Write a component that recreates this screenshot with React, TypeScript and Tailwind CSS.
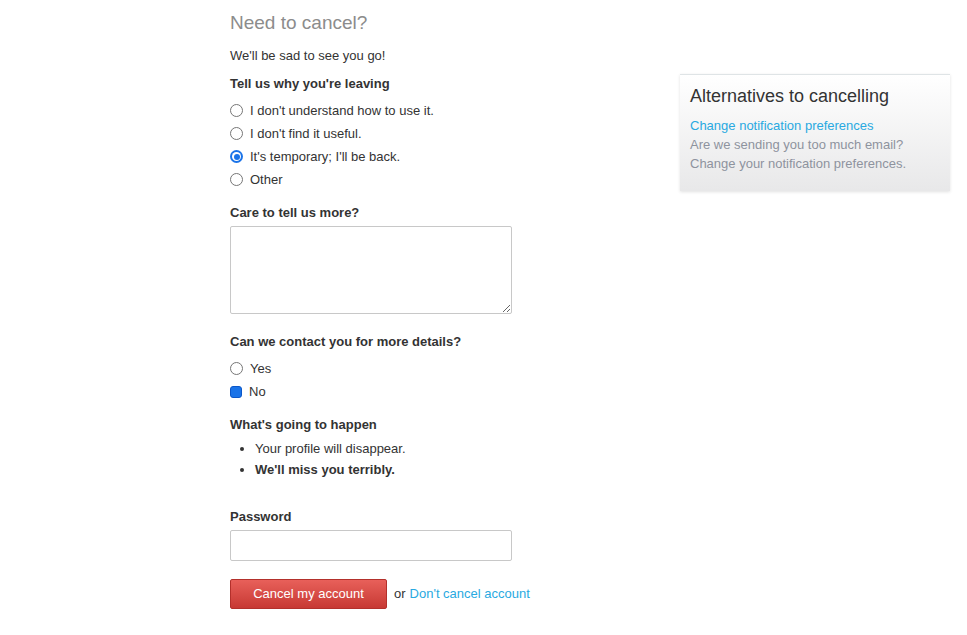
import React from "react";

const reasons = [
  "I don't understand how to use it.",
  "I don't find it useful.",
  "It's temporary; I'll be back.",
  "Other",
];

function Radio({ checked = false }: { checked?: boolean }) {
  if (checked) {
    return (
      <span className="flex h-[13px] w-[13px] shrink-0 items-center justify-center rounded-full bg-[#1a73e8]">
        <span className="flex h-[9px] w-[9px] items-center justify-center rounded-full bg-white">
          <span className="h-[6px] w-[6px] rounded-full bg-[#1a73e8]" />
        </span>
      </span>
    );
  }
  return <span className="h-[13px] w-[13px] shrink-0 rounded-full border border-[#767676] bg-white" />;
}

function Option({ label, checked, square }: { label: string; checked?: boolean; square?: boolean }) {
  return (
    <label className="flex h-[23px] items-center gap-[7px]">
      {square ? (
        <span className="h-[12px] w-[12px] shrink-0 rounded-[3px] border border-[#0b57c9] bg-[#1a73e8]" />
      ) : (
        <Radio checked={checked} />
      )}
      <span>{label}</span>
    </label>
  );
}

export default function App() {
  return (
    <div
      className="flex min-h-[635px] bg-white pl-[230px] text-[13px] leading-[18px] text-[#333]"
      style={{ fontFamily: '"Liberation Sans", Arial, sans-serif' }}
    >
      <form className="w-[450px]">
        <h1 className="mt-[11px] text-[19px] font-light leading-[24px] text-[#8c8c8c]">Need to cancel?</h1>
        <p className="mt-[12px]">We'll be sad to see you go!</p>

        <div className="mt-[10px] font-bold">Tell us why you're leaving</div>
        <div className="mt-[6px]">
          {reasons.map((r, i) => (
            <Option key={r} label={r} checked={i === 2} />
          ))}
        </div>

        <div className="mt-[13px] font-bold">Care to tell us more?</div>
        <textarea className="mt-[4px] block h-[88px] w-[282px] rounded-[2px] border border-[#c8c8c8] bg-white" />

        <div className="mt-[19px] font-bold">Can we contact you for more details?</div>
        <div className="mt-[6px]">
          <Option label="Yes" />
          <Option label="No" square />
        </div>

        <div className="mt-[13px] font-bold">What's going to happen</div>
        <ul className="mt-[4px] list-disc pl-[25px] leading-[21px]">
          <li>Your profile will disappear.</li>
          <li className="font-bold">We'll miss you terribly.</li>
        </ul>

        <div className="mt-[28px] font-bold">Password</div>
        <input
          type="password"
          className="mt-[4px] block h-[31px] w-[282px] rounded-[2px] border border-[#c8c8c8] bg-white"
        />

        <div className="mt-[18px] flex items-center">
          <button
            type="button"
            className="h-[30px] w-[157px] rounded-[2px] border border-[#b3302b] bg-gradient-to-b from-[#e8605a] to-[#c73833] text-white"
          >
            Cancel my account
          </button>
          <span className="ml-[7px]">or</span>
          <a className="ml-[4px] text-[#29a9e1]">Don't cancel account</a>
        </div>
      </form>

      <aside className="mt-[74px] h-fit w-[270px] border-t border-[#dfe4e6] bg-gradient-to-b from-white to-[#e8e8e9] px-[10px] pb-[18px] pt-[10px] shadow-[0_1px_3px_rgba(0,0,0,0.12)]">
        <h2 className="text-[18px] leading-[22px] text-[#333]">Alternatives to cancelling</h2>
        <div className="mt-[9px] leading-[19px]">
          <a className="block text-[#29a9e1]">Change notification preferences</a>
          <div className="text-[#8e939e]">Are we sending you too much email?</div>
          <div className="text-[#8e939e]">Change your notification preferences.</div>
        </div>
      </aside>
    </div>
  );
}
